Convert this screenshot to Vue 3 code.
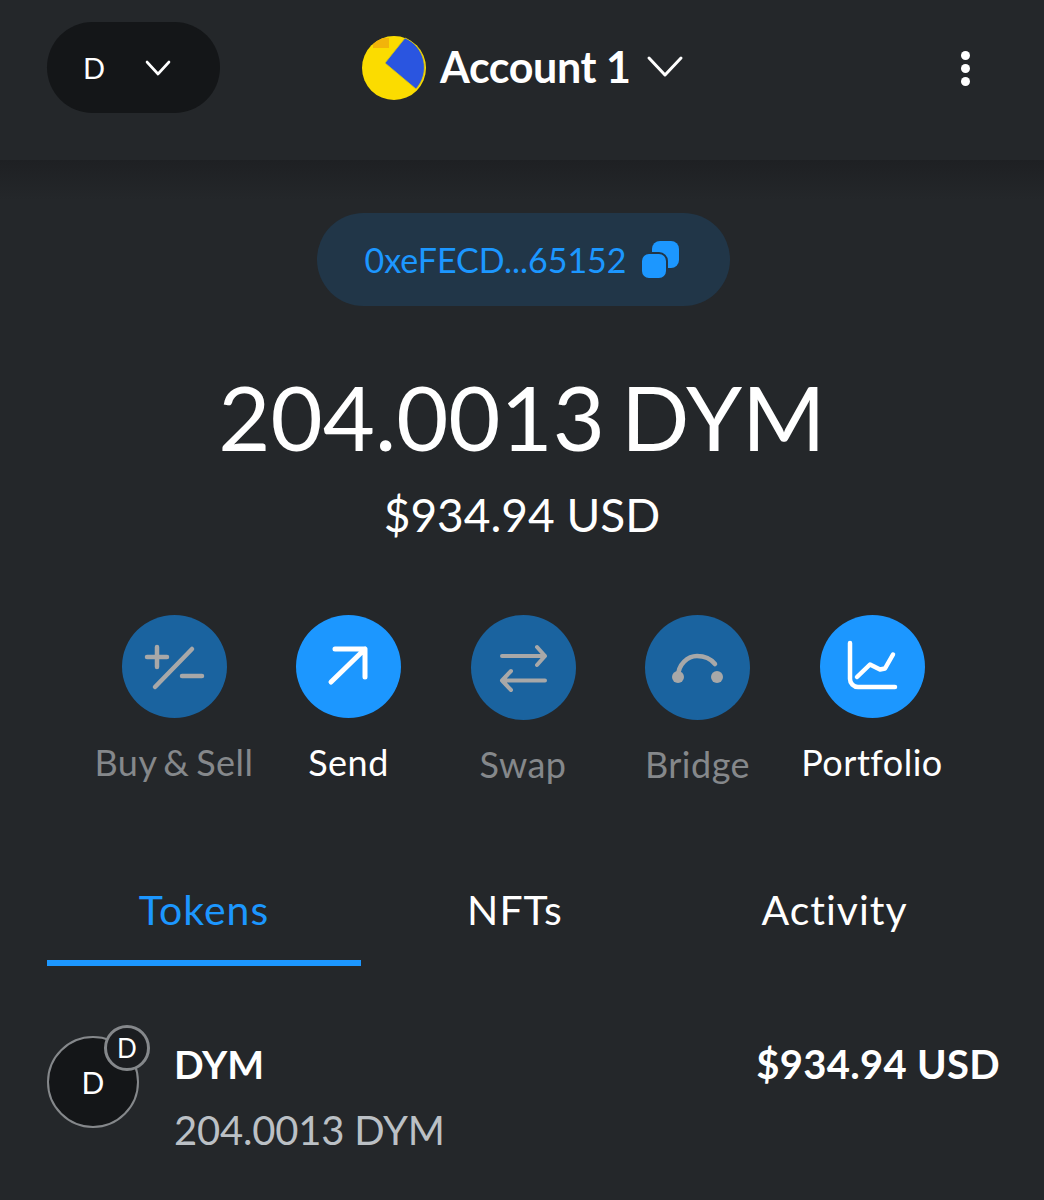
<template>
  <div class="wallet">
    <header class="topbar">
      <button class="network">
        <span class="network-letter">D</span>
        <svg width="30" height="18" viewBox="0 0 30 18" fill="none" stroke="#fff" stroke-width="2.6" stroke-linecap="round" stroke-linejoin="round">
          <path d="M4 3l11 12L26 3" />
        </svg>
      </button>
      <div class="account">
        <svg class="avatar" width="64" height="64" viewBox="0 0 64 64">
          <circle cx="32" cy="32" r="32" fill="#fbdc00" />
          <path d="M43 2 L23 27 L54 53 A32 32 0 0 0 43 2Z" fill="#2a55e0" stroke="#d9c60e" stroke-width="0.8" />
          <path d="M27 2H21A32 32 0 0 0 11 8V12H27Z" fill="#f2b40a" />
        </svg>
        <span class="account-name">Account 1</span>
        <svg class="account-chevron" width="38" height="24" viewBox="0 0 38 24" fill="none" stroke="#fff" stroke-width="3" stroke-linecap="round" stroke-linejoin="round">
          <path d="M3 4l16 17L35 4" />
        </svg>
      </div>
      <div class="dots"><i></i><i></i><i></i></div>
    </header>
    <div class="shade"></div>

    <main class="main">
      <div class="address">
        <span>0xeFECD...65152</span>
        <svg width="40" height="40" viewBox="0 0 40 40" fill="#1c97ff">
          <rect x="12" y="1" width="27" height="27" rx="8" />
          <rect x="1" y="13" width="26" height="26" rx="8" stroke="#213648" stroke-width="2" />
        </svg>
      </div>

      <div class="balance">204.0013 DYM</div>
      <div class="fiat">$934.94 USD</div>

      <div class="actions">
        <div v-for="a in actions" :key="a.label" class="action" :class="{ muted: a.muted, tall: a.tall }">
          <div class="circle">
            <svg width="64" height="64" viewBox="0 0 64 64" fill="none" :stroke="a.muted ? '#a8a8a8' : '#fff'" stroke-width="4.500" stroke-linecap="round" stroke-linejoin="round" v-html="a.icon"></svg>
          </div>
          <span class="label">{{ a.label }}</span>
        </div>
      </div>

      <nav class="tabs">
        <div v-for="t in tabs" :key="t" class="tab" :class="{ active: t === active }">{{ t }}</div>
      </nav>

      <div class="token">
        <div class="token-icon">
          <div class="coin">D</div>
          <div class="chain">D</div>
        </div>
        <div class="token-text">
          <div class="token-name">DYM</div>
          <div class="token-amount">204.0013 DYM</div>
        </div>
        <div class="token-value">$934.94 USD</div>
      </div>
    </main>
  </div>
</template>

<script setup>
const active = 'Tokens'
const tabs = ['Tokens', 'NFTs', 'Activity']

const actions = [
  {
    label: 'Buy & Sell',
    muted: true,
    icon: '<path d="M15 12v20M5 22h20M50 14 13 52M40 41h20" />'
  },
  { label: 'Send', icon: '<path d="M14 47 48 14M18 14h30v28" stroke-width="5" />' },
  {
    label: 'Swap',
    muted: true,
    tall: true,
    icon: '<path d="M11 20h43M46 11l8 9-8 9M54 44.500H11M20 35l-9 9.500 9 9.500" stroke-width="4" />'
  },
  {
    label: 'Bridge',
    muted: true,
    tall: true,
    icon: '<path d="M12 41C12 28 22 20 31 20c7 0 14 3 18 8" /><circle cx="12" cy="41" r="6" fill="#a8a8a8" stroke="none" /><circle cx="51" cy="41" r="6" fill="#a8a8a8" stroke="none" />'
  },
  {
    label: 'Portfolio',
    icon: '<path d="M10 8v36a8 8 0 0 0 8 8h37M17 42l13-12.500 10 5 5-1 8-14" />'
  }
]
</script>

<style>
html,
body {
  margin: 0;
  background: #24272a;
}
</style>

<style scoped>
.wallet {
  width: 1044px;
  height: 1200px;
  overflow: hidden;
  background: #24272a;
  color: #fff;
  font-family: Lato, "Open Sans", sans-serif;
}

.topbar {
  height: 160px;
  box-sizing: border-box;
  padding: 22px 0 0 47px;
  display: flex;
  align-items: flex-start;
  background: #24272a;
}

.network {
  width: 173px;
  height: 91px;
  border: 0;
  border-radius: 46px;
  background: #141618;
  color: #fff;
  display: flex;
  align-items: center;
  gap: 38px;
  padding: 0 0 0 36px;
  font-family: inherit;
}

.network-letter {
  font-size: 29px;
}

.account {
  margin-left: 142px;
  margin-top: 14px;
  display: flex;
  align-items: center;
}

.account-name {
  margin-left: 14px;
  margin-right: 15px;
  margin-top: -4px;
  font-size: 43px;
  font-weight: 700;
  letter-spacing: -0.4px;
}

.account-chevron {
  margin-top: -4px;
}

.dots {
  margin-left: auto;
  margin-right: 74px;
  margin-top: 29px;
  display: flex;
  flex-direction: column;
  gap: 4px;
}

.dots i {
  width: 9px;
  height: 9px;
  border-radius: 50%;
  background: #fff;
}

.shade {
  height: 40px;
  background: linear-gradient(#1e2023, #24272a);
}

.main {
  display: flex;
  flex-direction: column;
  align-items: center;
}

.address {
  margin-top: 13px;
  margin-left: 2px;
  width: 413px;
  height: 93px;
  box-sizing: border-box;
  padding-right: 2px;
  border-radius: 47px;
  background: #213648;
  color: #1c97ff;
  font-size: 34px;
  display: flex;
  align-items: center;
  justify-content: center;
  gap: 13px;
}

.balance {
  margin-top: 55px;
  font-size: 90px;
  line-height: 110px;
  word-spacing: -7px;
}

.fiat {
  margin-top: 16px;
  font-size: 46px;
  line-height: 56px;
}

.actions {
  margin-top: 72px;
  margin-left: 2px;
  display: grid;
  grid-template-columns: repeat(5, 174.500px);
}

.action {
  display: flex;
  flex-direction: column;
  align-items: center;
}

.circle {
  width: 105px;
  height: 103px;
  border-radius: 50%;
  background: #1c97ff;
  display: flex;
  align-items: center;
  justify-content: center;
}

.label {
  margin-top: 23px;
  font-size: 36px;
  line-height: 42px;
  letter-spacing: 0.5px;
  word-spacing: -3px;
  white-space: nowrap;
}

.muted .circle {
  background: #1a639f;
}

.tall .circle {
  height: 105px;
}

.muted .label {
  color: #85888b;
}

.tabs {
  margin-top: 81px;
  width: 1044px;
  box-sizing: border-box;
  padding-left: 47px;
  display: grid;
  grid-template-columns: 314px 308px 331px;
}

.tab {
  height: 100px;
  box-sizing: border-box;
  padding-top: 19px;
  font-size: 41px;
  line-height: 50px;
  letter-spacing: 1px;
  text-align: center;
  border-bottom: 6px solid transparent;
}

.tab.active {
  color: #1c97ff;
  border-bottom-color: #1c97ff;
}

.token {
  margin-top: 59px;
  width: 1044px;
  box-sizing: border-box;
  padding: 0 44px 0 47px;
  display: flex;
  align-items: flex-start;
}

.token-icon {
  position: relative;
  width: 92px;
  height: 92px;
  margin-top: 11px;
}

.coin,
.chain {
  box-sizing: border-box;
  border-radius: 50%;
  background: #141618;
  border: 2px solid #85888b;
  display: flex;
  align-items: center;
  justify-content: center;
}

.coin {
  width: 92px;
  height: 92px;
  font-size: 30px;
}

.chain {
  position: absolute;
  left: 57px;
  top: -11px;
  width: 46px;
  height: 46px;
  border-width: 3px;
  background: #1b1d20;
  font-size: 26px;
}

.token-text {
  margin-left: 35px;
}

.token-name {
  font-size: 39px;
  font-weight: 700;
  line-height: 48px;
  margin-top: 15px;
}

.token-amount {
  margin-top: 16px;
  font-size: 40px;
  line-height: 52px;
  letter-spacing: -0.2px;
  color: #bbc0c5;
}

.token-value {
  margin-left: auto;
  margin-top: 15px;
  font-size: 40px;
  font-weight: 700;
  line-height: 48px;
  letter-spacing: 0.3px;
}
</style>
